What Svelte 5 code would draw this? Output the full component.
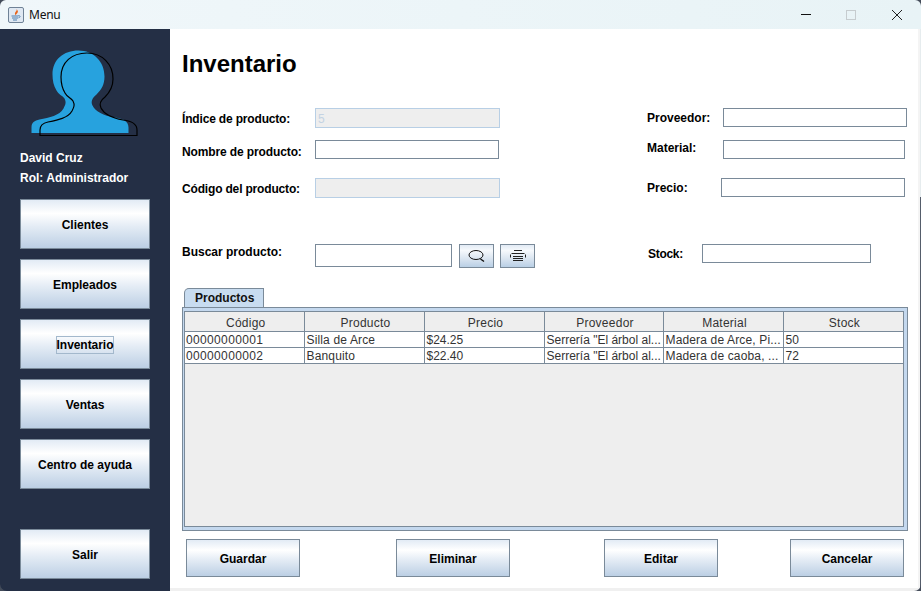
<script>
  const menu = [
    { label: 'Clientes' },
    { label: 'Empleados' },
    { label: 'Inventario', focused: true },
    { label: 'Ventas' },
    { label: 'Centro de ayuda' }
  ];

  const columns = ['Código', 'Producto', 'Precio', 'Proveedor', 'Material', 'Stock'];

  const rows = [
    ['00000000001', 'Silla de Arce', '$24.25', 'Serrería "El árbol al...', 'Madera de Arce, Pi...', '50'],
    ['00000000002', 'Banquito', '$22.40', 'Serrería "El árbol al...', 'Madera de caoba, ...', '72']
  ];

  const person = 'M40 135.5V130C40 125 43 123 48 122C58 120 68 118 72 111C74 107 75 105 73 101C71 98 67 97 65 93C62 88 61 83 61 77C61 62 72 53 87 53C102 53 113 64 113 79C113 87 110 92 105 97C101 100 99 104 101 108C104 114 112 118 123 120C132 121 137 124 137 130V135.5Z';
</script>

<div class="window">
  <header class="titlebar">
    <svg class="app-icon" width="16" height="16" viewBox="0 0 16 16">
      <rect x="0.5" y="0.5" width="15" height="15" rx="1.5" fill="#dfe8f2" stroke="#6f8296" />
      <path d="M8.5 2C9.5 4 6.5 5 7 7C7.3 8 8 8.5 8 8.5C7.5 7 10.5 6 9.8 4C9.6 3.3 9 2.5 8.5 2Z" fill="#e8641b" />
      <path d="M3.5 9H10.5M4 11H10M5 13H9" stroke="#4f7fae" stroke-width="1" />
      <path d="M10.5 8.5C12.5 8.5 12.5 10.5 10.5 10.8" stroke="#4f7fae" fill="none" />
    </svg>
    <span class="app-title">Menu</span>
    <div class="win-controls">
      <span class="win-min"></span>
      <span class="win-max"></span>
      <svg width="10" height="10" viewBox="0 0 10 10">
        <path d="M0 0L10 10M10 0L0 10" stroke="#222" stroke-width="1" />
      </svg>
    </div>
  </header>

  <div class="content">
    <aside class="sidebar">
      <svg class="avatar" width="170" height="119" viewBox="0 29 170 119">
        <path d={person} fill="#27a2de" transform="translate(-8.5 -2.5)" />
        <path d={person} fill="none" stroke="#000" stroke-width="1.2" />
      </svg>
      <div class="user">David Cruz</div>
      <div class="user">Rol: Administrador</div>
      <nav class="nav">
        {#each menu as item}
          <button class="btn side-btn">
            {#if item.focused}
              <span class="focus-box">{item.label}</span>
            {:else}
              {item.label}
            {/if}
          </button>
        {/each}
        <button class="btn side-btn salir">Salir</button>
      </nav>
    </aside>

    <main class="main">
      <h1>Inventario</h1>

      <div class="form">
        <div class="col-left">
          <div class="field f1">
            <label class="lbl-left nudge-1 tight-2" for="indice">Índice de producto:</label>
            <input id="indice" class="input disabled" value="5" disabled />
          </div>
          <div class="field f2">
            <label class="lbl-left nudge-down tight-1" for="nombre">Nombre de producto:</label>
            <input id="nombre" class="input w184" />
          </div>
          <div class="field f3">
            <label class="lbl-left nudge-1 tight-2" for="codigo">Código del producto:</label>
            <input id="codigo" class="input disabled" disabled />
          </div>
          <div class="field f4">
            <label class="lbl-left lbl-search" for="buscar">Buscar producto:</label>
            <input id="buscar" class="input search" />
            <button class="btn icon-btn first" aria-label="Buscar">
              <svg width="18" height="13" viewBox="0 0 18 13">
                <ellipse cx="8" cy="5" rx="7" ry="4.5" fill="none" stroke="#111" />
                <path d="M12.5 9L16 11.5" stroke="#111" stroke-width="1.5" />
              </svg>
            </button>
            <button class="btn icon-btn" aria-label="Imprimir">
              <svg width="16" height="12" viewBox="0 0 16 12">
                <path d="M4 0.5H12M1.5 3.5H14.5M0.5 4.5V7.5M15.5 4.5V7.5M3 6.5H13M3 8.5H13M3 10.5H13" fill="none" stroke="#222" />
              </svg>
            </button>
          </div>
        </div>

        <div class="col-right">
          <div class="field f1">
            <label class="lbl-prov" for="proveedor">Proveedor:</label>
            <input id="proveedor" class="input w184" />
          </div>
          <div class="field f2b">
            <label class="lbl-prov nudge-up" for="material">Material:</label>
            <input id="material" class="input w182" />
          </div>
          <div class="field f3b">
            <label class="lbl-precio" for="precio">Precio:</label>
            <input id="precio" class="input w184" />
          </div>
          <div class="field f4b">
            <label class="lbl-stock" for="stock">Stock:</label>
            <input id="stock" class="input w169" />
          </div>
        </div>
      </div>

      <div class="tabs">
        <div class="tab">Productos</div>
      </div>
      <div class="pane">
        <div class="viewport">
          <table>
            <thead>
              <tr>
                {#each columns as col}
                  <th>{col}</th>
                {/each}
              </tr>
            </thead>
            <tbody>
              {#each rows as row}
                <tr>
                  {#each row as cell}
                    <td>{cell}</td>
                  {/each}
                </tr>
              {/each}
            </tbody>
          </table>
        </div>
      </div>

      <div class="actions">
        <button class="btn action">Guardar</button>
        <button class="btn action a2">Eliminar</button>
        <button class="btn action a3">Editar</button>
        <button class="btn action a4">Cancelar</button>
      </div>
    </main>
  </div>
</div>

<style>
  :global(body) {
    margin: 0;
    background: #444c5a;
    overflow: hidden;
  }

  .window {
    width: 921px;
    height: 591px;
    display: flex;
    flex-direction: column;
    overflow: hidden;
    border-radius: 6px 6px 7px 7px;
    font-family: "Liberation Sans", Arial, sans-serif;
    font-size: 12px;
    color: #000;
  }

  .titlebar {
    height: 29px;
    flex: none;
    display: flex;
    align-items: center;
    padding-left: 8px;
    background: linear-gradient(90deg, #f0f7fa, #e8f3f6);
    box-sizing: border-box;
  }

  .app-title {
    margin-left: 5px;
    font-family: "Noto Sans", "Open Sans", sans-serif;
    font-size: 12px;
    letter-spacing: -0.25px;
    color: #111;
  }

  .win-controls {
    margin-left: auto;
    display: flex;
    align-items: center;
    padding-right: 19px;
  }

  .win-min {
    width: 10px;
    height: 1px;
    background: #111;
    margin-right: 35px;
  }

  .win-max {
    width: 8px;
    height: 8px;
    border: 1px solid #c6cccf;
    margin-right: 36px;
  }

  .content {
    flex: 1;
    display: flex;
    min-height: 0;
    background: linear-gradient(#e6ecee 168px, #555d6b 168px);
  }

  .sidebar {
    width: 170px;
    flex: none;
    box-sizing: border-box;
    background: #242f45;
    padding: 0 20px;
  }

  .avatar {
    display: block;
    margin: 0 -20px;
  }

  .user {
    height: 20px;
    line-height: 20px;
    font-weight: bold;
    color: #fff;
  }

  .nav {
    display: flex;
    flex-direction: column;
    gap: 10px;
    margin-top: 11px;
  }

  .btn {
    padding: 0;
    box-sizing: border-box;
    border: 1px solid #7a8a99;
    border-radius: 0;
    background: linear-gradient(180deg, #e2ebf5 0%, #ffffff 28%, #e4ecf5 55%, #bccfe4 100%);
    font-family: inherit;
    font-size: 12px;
    font-weight: bold;
    color: #000;
    display: flex;
    align-items: center;
    justify-content: center;
  }

  .side-btn {
    width: 130px;
    height: 50px;
    padding-top: 2px;
  }

  .salir {
    margin-top: 30px;
  }

  .focus-box {
    border: 1px solid #a3b8cc;
    padding: 2px 0 1px;
    line-height: 13px;
    letter-spacing: -0.05px;
  }

  .main {
    flex: 1;
    min-width: 0;
    margin-right: 1px;
    padding-left: 12px;
    box-sizing: border-box;
    background: linear-gradient(#fff 559px, #f0f0f0 559px);
    border-right: 2px solid #f4f4f4;
  }

  h1 {
    margin: 0;
    padding-top: 20px;
    height: 30px;
    line-height: 30px;
    margin-bottom: 29px;
    font-size: 24px;
    font-weight: bold;
  }

  .form {
    display: flex;
  }

  .col-left {
    width: 465px;
    flex: none;
  }

  .field {
    display: flex;
    align-items: center;
  }

  .f2 { margin-top: 12px; }
  .f3 { margin-top: 19px; }
  .f4 { margin-top: 46px; align-items: flex-start; }
  .f2b { margin-top: 13px; }
  .f3b { margin-top: 19px; }
  .f4b { margin-top: 47px; }

  label {
    font-weight: bold;
    flex: none;
  }

  .nudge-down { position: relative; top: 2px; }
  .nudge-1 { position: relative; top: 1px; }
  .nudge-up { position: relative; top: -2px; }
  .tight-1 { letter-spacing: -0.12px; }
  .tight-2 { letter-spacing: -0.17px; }

  .lbl-left { width: 133px; }
  .lbl-search { padding-top: 1px; }
  .lbl-prov { width: 76px; }
  .lbl-precio { width: 74px; }
  .lbl-stock { width: 54px; margin-left: 1px; letter-spacing: -0.3px; }

  .input {
    box-sizing: border-box;
    width: 185px;
    height: 20px;
    margin: 0;
    padding: 1px 2px 0;
    border: 1px solid #7a8a99;
    border-radius: 0;
    background: #fff;
    font-family: inherit;
    font-size: 12px;
    outline: none;
  }

  .input.disabled {
    background: #eeeeee;
    border-color: #b8cfe5;
    color: #c4d3e3;
  }

  .w184 { width: 184px; height: 19px; }
  .w182 { width: 182px; height: 19px; }
  .w169 { width: 169px; height: 19px; }

  .search {
    width: 137px;
    height: 23px;
  }

  .icon-btn {
    width: 35px;
    height: 24px;
    margin-left: 6px;
    background: linear-gradient(180deg, #e2ebf5 0%, #f6f9fc 25%, #dce6f1 60%, #b9cfe5 100%);
  }

  .icon-btn.first {
    margin-left: 7px;
  }

  .tabs {
    margin-top: 20px;
    padding-left: 2px;
    height: 20px;
  }

  .tab {
    box-sizing: border-box;
    width: 80px;
    height: 20px;
    line-height: 18px;
    padding-left: 10px;
    font-weight: bold;
    background: #c8dcf0;
    border: 1px solid #7a8a99;
    border-bottom: 0;
    border-top-left-radius: 5px;
    color: #111;
  }

  .pane {
    box-sizing: border-box;
    width: 726px;
    height: 224px;
    margin-top: -1px;
    padding: 3px 3px 3px 1px;
    background: #c4d8ee;
    border: 1px solid #7a8a99;
  }

  .viewport {
    box-sizing: border-box;
    height: 100%;
    background: #eeeeee;
    border: 1px solid #7a8a99;
  }

  table {
    table-layout: fixed;
    width: 718px;
    border-collapse: collapse;
    color: #333;
  }

  th, td {
    box-sizing: border-box;
    overflow: hidden;
    white-space: nowrap;
    border-right: 1px solid #7a8a99;
    border-bottom: 1px solid #7a8a99;
    padding: 0 1px;
    font-size: 12px;
    font-weight: normal;
    line-height: 14px;
  }

  th {
    height: 19px;
    padding: 3px 0 0 3px;
    text-align: center;
    background: #eeeeee;
    color: #333;
    letter-spacing: 0.25px;
    width: 120px;
  }

  th:first-child, th:nth-child(4) {
    width: 119px;
  }

  td {
    height: 16px;
    padding: 1px 0 0 2px;
    text-align: left;
    background: #fff;
  }

  td:first-child {
    padding-left: 1px;
    letter-spacing: 0.35px;
  }

  td:nth-child(2), td:nth-child(5) {
    letter-spacing: 0.15px;
  }

  .actions {
    display: flex;
    margin-top: 8px;
    padding-left: 4px;
  }

  .action {
    width: 114px;
    height: 38px;
    padding-top: 2px;
  }

  .a2 { margin-left: 96px; }
  .a3 { margin-left: 94px; }
  .a4 { margin-left: 72px; }
</style>
